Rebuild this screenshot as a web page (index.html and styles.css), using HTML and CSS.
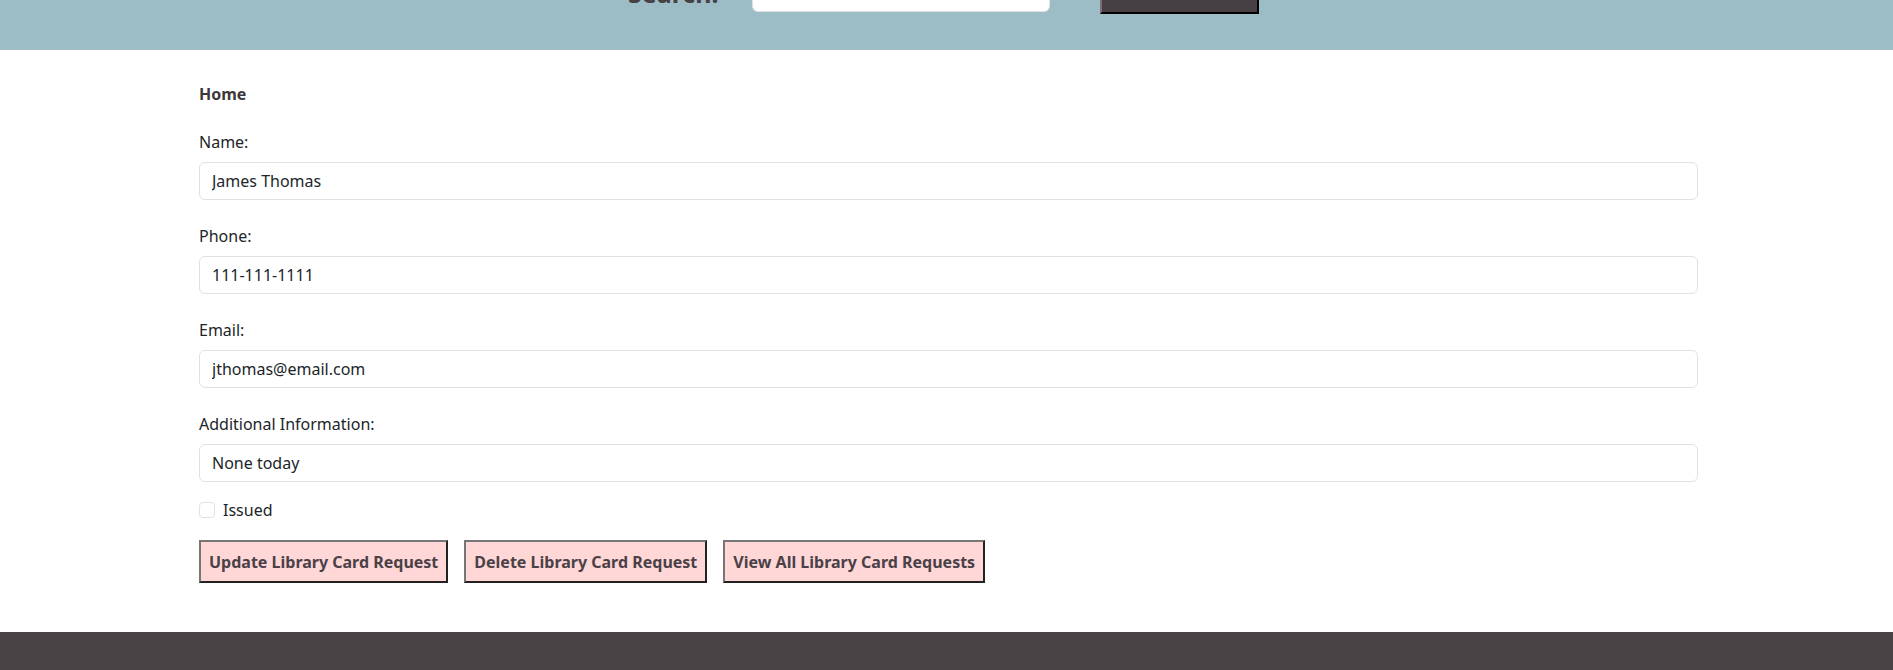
FILE: index.html
```html
<!DOCTYPE html>
<html lang="en">
<head>
<meta charset="utf-8">
<title>Library Card Request</title>
<link rel="stylesheet" href="styles.css">
</head>
<body>
<header class="site-header">
  <div class="search-bar">
    <label class="search-label" for="q">Search:</label>
    <input class="search-input" id="q" type="text">
    <button class="search-btn" type="button">Search</button>
  </div>
</header>
<main class="main">
  <div class="crumb">Home</div>
  <form class="card-form">
    <div class="form-group">
      <label class="form-label" for="name">Name:</label>
      <input class="form-control" id="name" type="text" value="James Thomas">
    </div>
    <div class="form-group">
      <label class="form-label" for="phone">Phone:</label>
      <input class="form-control" id="phone" type="text" value="111-111-1111">
    </div>
    <div class="form-group">
      <label class="form-label" for="email">Email:</label>
      <input class="form-control" id="email" type="text" value="jthomas@email.com">
    </div>
    <div class="form-group last">
      <label class="form-label" for="info">Additional Information:</label>
      <input class="form-control" id="info" type="text" value="None today">
    </div>
    <div class="form-check">
      <input class="check-input" id="issued" type="checkbox">
      <label class="check-label" for="issued">Issued</label>
    </div>
    <div class="actions">
      <button class="action-btn" type="button">Update Library Card Request</button>
      <button class="action-btn" type="button">Delete Library Card Request</button>
      <button class="action-btn" type="button">View All Library Card Requests</button>
    </div>
  </form>
</main>
<footer class="site-footer"></footer>
</body>
</html>
```

FILE: styles.css
```css
* { box-sizing: border-box; }

html, body {
  margin: 0;
  padding: 0;
}

body {
  font-family: "Noto Sans", "Open Sans", sans-serif;
  font-size: 16px;
  line-height: 1.5;
  color: #212529;
  background: #fff;
}

.site-header {
  background: #9cbdc6;
  height: 114px;
  margin-top: -64px;
  display: flex;
  align-items: center;
}

.search-bar {
  display: flex;
  align-items: center;
  margin-left: 628px;
}

.search-label {
  flex: none;
  font-size: 25px;
  line-height: 1.2;
  font-weight: 700;
  color: #463f44;
  margin-right: 33px;
}

.search-input {
  flex: none;
  width: 298px;
  height: 38px;
  border: 1px solid #dee2e6;
  border-radius: 6px;
  background: #fff;
}

.search-btn {
  flex: none;
  margin-left: 50px;
  width: 159px;
  height: 42px;
  background: #463f44;
  color: #fff;
  border: 2px outset #2a2428;
  font: 700 16px "Noto Sans", sans-serif;
}

.main {
  padding: 32px 195px 49px 199px;
}

.crumb {
  font-weight: 700;
  color: #3d373b;
  margin-bottom: 24px;
}

.form-group {
  margin-bottom: 24px;
}

.form-group.last {
  margin-bottom: 16px;
}

.form-label {
  display: block;
  margin-bottom: 8px;
}

.form-control {
  display: block;
  width: 100%;
  height: 38px;
  padding: 6px 12px;
  font: 16px/1.5 "Noto Sans", "Open Sans", sans-serif;
  color: #212529;
  background: #fff;
  border: 1px solid #dee2e6;
  border-radius: 6px;
}

.form-check {
  display: flex;
  align-items: center;
  gap: 8px;
  height: 24px;
  margin-bottom: 18px;
}

.check-input {
  appearance: none;
  -webkit-appearance: none;
  width: 16px;
  height: 16px;
  margin: 0;
  border: 1px solid #dee2e6;
  border-radius: 4px;
  background: #fff;
}

.actions {
  display: flex;
  gap: 16px;
}

.action-btn {
  background: #ffd7d7;
  color: #4a4147;
  font: 700 16px/25px "Noto Sans", "Open Sans", sans-serif;
  padding: 8px 8px 6px;
  border: 2px solid;
  border-color: #767676 #222 #222 #767676;
  height: 43px;
}

.site-footer {
  background: #4a4346;
  height: 80px;
}
```
